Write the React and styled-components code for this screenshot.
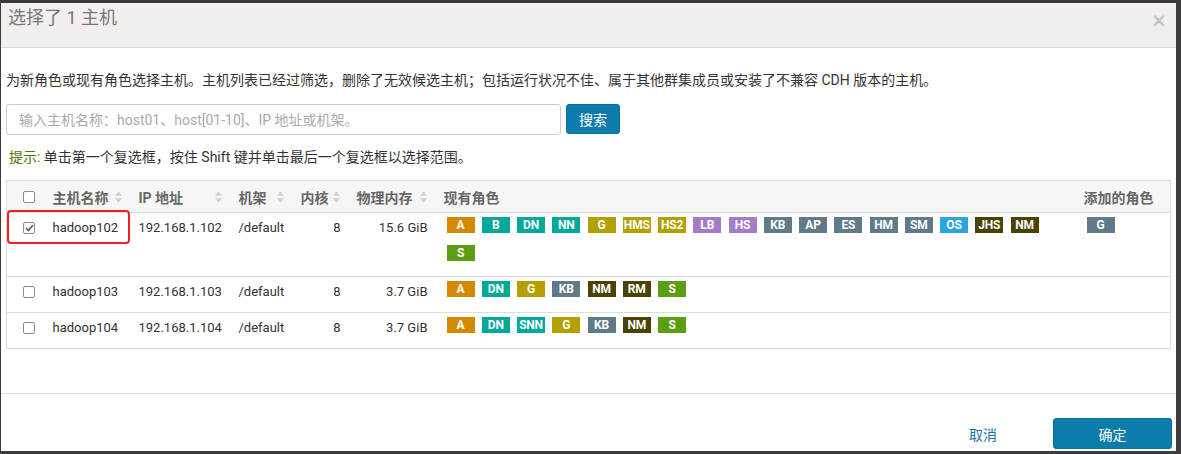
import styled, { createGlobalStyle } from "styled-components";

const GlobalStyle = createGlobalStyle`
    *, *::before, *::after {
        box-sizing: border-box;
    }
    html, body {
        margin: 0;
        padding: 0;
        background: #3b3b3b;
        font-family: Roboto, "Noto Sans CJK SC", sans-serif;
        color: #333;
    }
`

const colors = {
    orange: '#d48a00',
    teal: '#00a99a',
    olive: '#b4a100',
    purple: '#a57cc6',
    slate: '#607a89',
    blue: '#2aa5dd',
    dark: '#4a4200',
    green: '#5c9e12',
}

const roleColor = {
    A: 'orange', B: 'teal', DN: 'teal', NN: 'teal', SNN: 'teal',
    G: 'olive', HMS: 'olive', HS2: 'olive', LB: 'purple', HS: 'purple',
    KB: 'slate', AP: 'slate', ES: 'slate', HM: 'slate', SM: 'slate',
    OS: 'blue', JHS: 'dark', NM: 'dark', RM: 'dark', S: 'green',
}

const hosts = [
    { name: 'hadoop102', ip: '192.168.1.102', cores: 8, mem: '15.6 GiB', checked: true, added: ['G'],
      roles: ['A', 'B', 'DN', 'NN', 'G', 'HMS', 'HS2', 'LB', 'HS', 'KB', 'AP', 'ES', 'HM', 'SM', 'OS', 'JHS', 'NM', 'S'] },
    { name: 'hadoop103', ip: '192.168.1.103', cores: 8, mem: '3.7 GiB', added: [],
      roles: ['A', 'DN', 'G', 'KB', 'NM', 'RM', 'S'] },
    { name: 'hadoop104', ip: '192.168.1.104', cores: 8, mem: '3.7 GiB', added: [],
      roles: ['A', 'DN', 'SNN', 'G', 'KB', 'NM', 'S'] },
]

const App = () => {
    return (
        <>
            <GlobalStyle />
            <Modal>
                <Header>
                    <Title>选择了 1 主机</Title>
                    <Close>×</Close>
                </Header>
                <Body>
                    <Intro>为新角色或现有角色选择主机。主机列表已经过筛选，删除了无效候选主机；包括运行状况不佳、属于其他群集成员或安装了不兼容 CDH 版本的主机。</Intro>
                    <SearchRow>
                        <SearchInput placeholder="输入主机名称：host01、host[01-10]、IP 地址或机架。" />
                        <PrimaryButton $w={54} $h={30}>搜索</PrimaryButton>
                    </SearchRow>
                    <Hint><em>提示:</em> 单击第一个复选框，按住 Shift 键并单击最后一个复选框以选择范围。</Hint>
                    <HostTable>
                        <colgroup>
                            <col style={{ width: 38 }} />
                            <col style={{ width: 86 }} />
                            <col style={{ width: 100 }} />
                            <col style={{ width: 62 }} />
                            <col style={{ width: 56 }} />
                            <col style={{ width: 87 }} />
                            <col style={{ width: 640 }} />
                            <col style={{ width: 95 }} />
                        </colgroup>
                        <thead>
                            <tr>
                                <Th $check><Checkbox /></Th>
                                <Th>主机名称<SortIcon /></Th>
                                <Th>IP 地址<SortIcon /></Th>
                                <Th>机架<SortIcon /></Th>
                                <Th>内核<SortIcon /></Th>
                                <Th>物理内存<SortIcon /></Th>
                                <Th>现有角色</Th>
                                <Th>添加的角色</Th>
                            </tr>
                        </thead>
                        <tbody>
                            {hosts.map((h) => (
                                <tr key={h.name}>
                                    <Td $check><Checkbox checked={h.checked} /></Td>
                                    <Td>
                                        {h.name}
                                        {h.checked && <Highlight />}
                                    </Td>
                                    <Td>{h.ip}</Td>
                                    <Td>/default</Td>
                                    <Td $right>{h.cores}</Td>
                                    <Td $right>{h.mem}</Td>
                                    <RoleCell><Roles>{h.roles.map((r, i) => <Badge key={i} $c={colors[roleColor[r]]}>{r}</Badge>)}</Roles></RoleCell>
                                    <RoleCell><Roles>{h.added.map((r, i) => <Badge key={i} $c={colors.slate}>{r}</Badge>)}</Roles></RoleCell>
                                </tr>
                            ))}
                        </tbody>
                    </HostTable>
                </Body>
                <Footer>
                    <LinkButton>取消</LinkButton>
                    <PrimaryButton $w={119} $h={31}>确定</PrimaryButton>
                </Footer>
            </Modal>
        </>
    )
}

const Checkbox = ({ checked }) => (
    <Box>
        {checked && (
            <svg width="9" height="8" viewBox="0 0 9 8">
                <path d="M1 4.2 L3.4 6.4 L8 1.2" fill="none" stroke="#666" strokeWidth="1.8" />
            </svg>
        )}
    </Box>
)

const SortIcon = () => (
    <Sort width="7" height="12" viewBox="0 0 7 12">
        <path d="M3.5 0.5 L7 4.8 L0 4.8 Z" fill="#cfcfcf" />
        <path d="M3.5 11.5 L7 7.2 L0 7.2 Z" fill="#cfcfcf" />
    </Sort>
)

const Modal = styled.div`
    margin: 3px 0 0 1px;
    width: 1175px;
    height: 448px;
    background: #fff;
    display: flex;
    flex-direction: column;
`

const Header = styled.div`
    height: 45px;
    flex: none;
    background: #f3efef;
    border-bottom: 1px solid #d9d9d9;
    display: flex;
    justify-content: space-between;
    align-items: flex-start;
    padding: 3px 9px 0 7px;
`

const Title = styled.h4`
    margin: 0;
    font-weight: normal;
    font-size: 18px;
    line-height: 24px;
    color: #777;
`

const Close = styled.span`
    font-family: "DejaVu Sans", sans-serif;
    font-size: 19px;
    font-weight: bold;
    line-height: 28px;
    color: #c4c4c4;
`

const Body = styled.div`
    flex: 1;
    padding: 22px 5px 0 5px;
    font-size: 14px;
`

const Intro = styled.p`
    margin: 0;
    line-height: 20px;
`

const SearchRow = styled.div`
    display: flex;
    align-items: flex-start;
    gap: 5px;
    margin-top: 14px;
`

const SearchInput = styled.input`
    width: 555px;
    height: 31px;
    border: 1px solid #ccc;
    border-radius: 3px;
    padding: 0 12px;
    font-family: Roboto, "Noto Sans CJK SC", sans-serif;
    font-size: 14px;
    &::placeholder {
        color: #aaa;
    }
`

const PrimaryButton = styled.button`
    width: ${p => p.$w}px;
    height: ${p => p.$h}px;
    background: #0c7cab;
    color: #fff;
    border: 1px solid #0a6f99;
    border-radius: 3px;
    font-family: Roboto, "Noto Sans CJK SC", sans-serif;
    font-size: 14px;
    padding: 0;
`

const Hint = styled.p`
    margin: 12px 0 0 3px;
    line-height: 20px;
    em {
        font-style: normal;
        color: #4d7a06;
    }
`

const HostTable = styled.table`
    margin: 13px 0 0 0;
    width: 1165px;
    table-layout: fixed;
    border-collapse: collapse;
    border: 1px solid #ddd;
    font-size: 13px;
`

const Th = styled.th`
    position: relative;
    height: 32px;
    padding: ${p => p.$check ? '0 0 0 16px' : '0 8px'};
    background: #f6f6f6;
    border-bottom: 1px solid #ddd;
    text-align: left;
    font-size: 14px;
    font-weight: bold;
    color: #666;
    white-space: nowrap;
    vertical-align: middle;
`

const Sort = styled.svg`
    position: absolute;
    right: 9px;
    top: 10px;
`

const Td = styled.td`
    position: relative;
    padding: ${p => p.$check ? '6px 0 0 16px' : '6px 8px 0 8px'};
    text-align: ${p => p.$right ? 'right' : 'left'};
    vertical-align: top;
    line-height: 18px;
    color: #333;
    border-bottom: 1px solid #ddd;
    white-space: nowrap;
`

const RoleCell = styled.td`
    padding: 4px 8px 15px 11px;
    vertical-align: top;
    border-bottom: 1px solid #ddd;
`

const Roles = styled.div`
    display: flex;
    flex-wrap: wrap;
    column-gap: 7.25px;
    row-gap: 12px;
    min-height: 16px;
`

const Badge = styled.span`
    width: 28px;
    height: 16px;
    background: ${p => p.$c};
    color: #fff;
    font-family: Roboto, sans-serif;
    font-weight: bold;
    font-size: 12px;
    line-height: 16px;
    text-align: center;
    overflow: hidden;
    white-space: nowrap;
    letter-spacing: -0.2px;
`

const Box = styled.span`
    display: inline-flex;
    align-items: center;
    justify-content: center;
    width: 12px;
    height: 12px;
    border: 1px solid #8a8a8a;
    border-radius: 2px;
    background: #fff;
    vertical-align: middle;
    margin-top: -2px;
`

const Highlight = styled.span`
    position: absolute;
    left: -38px;
    top: -3px;
    width: 123px;
    height: 34px;
    border: 2px solid #f02020;
    border-radius: 4px;
    pointer-events: none;
`

const Footer = styled.div`
    height: 58px;
    flex: none;
    border-top: 1px solid #ddd;
    display: flex;
    justify-content: flex-end;
    align-items: flex-start;
    padding: 24px 4px 0 0;
`

const LinkButton = styled.button`
    width: 60px;
    height: 31px;
    margin-right: 40px;
    background: none;
    border: none;
    padding: 0;
    color: #1a74a6;
    font-family: Roboto, "Noto Sans CJK SC", sans-serif;
    font-size: 14px;
`

export default App;
